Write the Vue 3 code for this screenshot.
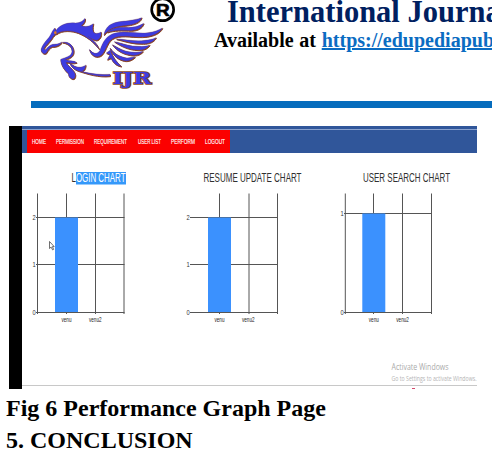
<template>
  <div class="page">
    <header class="masthead">
      <svg class="logo" width="160" height="100" viewBox="0 0 480 300">
        <g v-for="layer in ['shade', 'face']" :key="layer" :class="layer">
          <path v-for="(d, i) in horse" :key="i" :d="d" />
        </g>
        <circle class="eye" cx="76" cy="98" r="4" />
        <text class="ijr" x="248" y="253" textLength="116" lengthAdjust="spacingAndGlyphs">IJR</text>
        <circle class="reg-ring" cx="398" cy="29" r="33" />
        <text class="reg" x="378" y="47" textLength="41" lengthAdjust="spacingAndGlyphs">R</text>
      </svg>
      <div class="heading">
        <h1>International Journal</h1>
        <p>Available at <a>https://edupediapublications.org</a></p>
      </div>
    </header>
    <div class="rule"></div>

    <main class="capture">
      <div class="edge"></div>
      <div class="screen">
        <nav class="navbar">
          <div class="menu">
            <svg
              v-for="item in menu"
              :key="item.label"
              :width="item.width"
              height="23"
              :style="{ marginLeft: item.gap + 'px' }"
            >
              <text x="0" y="14" :textLength="item.width" lengthAdjust="spacingAndGlyphs">{{ item.label }}</text>
            </svg>
          </div>
        </nav>

        <section class="charts">
          <svg v-for="c in charts" :key="c.title" class="chart" width="153" height="180">
            <rect v-if="c.selected" class="selection" x="54" y="19" width="50" height="12.5" />
            <text class="title" :x="c.titleX" y="29" :textLength="c.titleWidth" lengthAdjust="spacingAndGlyphs">
              <template v-if="c.selected">L<tspan class="picked">OGIN CHART</tspan></template>
              <template v-else>{{ c.title }}</template>
            </text>

            <line v-for="x in c.columns" :key="'c' + x" class="grid" :x1="x" :x2="x" y1="40.5" y2="161" />
            <g v-for="t in c.ticks" :key="'t' + t.label">
              <line class="grid" :x1="c.left" :x2="c.right" :y1="t.y" :y2="t.y" />
              <text class="tick" :x="c.left - 3.5" :y="t.y + 2.5" textLength="3.2" lengthAdjust="spacingAndGlyphs">{{ t.label }}</text>
            </g>
            <rect class="bar" :x="c.barX" :y="c.barY" width="23" :height="159 - c.barY" />
            <text class="name" :x="c.barX + 6.5" y="169" textLength="10" lengthAdjust="spacingAndGlyphs">venu</text>
            <text class="name" :x="c.barX + 34" y="169" textLength="12.5" lengthAdjust="spacingAndGlyphs">venu2</text>
            <path v-if="c.selected" class="cursor" d="M27.5 88.5 v7 l1.6 -1.4 l1.5 2.8 l1 -.5 l-1.2 -2.8 h1.8 Z" />
          </svg>
        </section>

        <svg class="notice" width="88" height="24">
          <text class="notice-title" x="2.5" y="9" textLength="57" lengthAdjust="spacingAndGlyphs">Activate Windows</text>
          <text class="notice-text" x="2.5" y="20" textLength="85" lengthAdjust="spacingAndGlyphs">Go to Settings to activate Windows.</text>
        </svg>
        <div class="taskbar"><i></i></div>
      </div>
    </main>

    <h2>Fig 6 Performance Graph Page</h2>
    <h2>5. CONCLUSION</h2>
  </div>
</template>

<script setup>
// head and mane, forelegs, then the wing feathers from top to bottom
const horse = [
  'M75 96 C87 74 112 66 137 69 C151 69 160 62 165 55 C167 64 160 73 154 77 C168 82 180 78 190 71 C187 84 187 93 193 99 C201 102 208 99 213 96 C215 109 209 119 199 121 C190 120 181 115 174 109 C190 121 202 132 207 147 C190 125 170 109 145 99 C124 91 95 89 78 103 Z',
  'M74 84 C65 94 64 103 57 112 C47 124 35 137 33 150 C35 160 44 164 49 159 C54 151 58 143 67 140 C76 141 91 137 95 126 C86 133 75 132 68 133 C60 135 53 141 47 149 L41 147 C49 133 62 124 69 110 C76 103 80 99 77 93 Z',
  'M97 127 C116 123 131 137 131 155 C131 168 119 176 106 178 C118 185 132 180 140 188 C128 192 115 187 108 188 C117 201 134 210 136 225 C136 233 133 238 127 237 C119 234 114 227 116 222 C103 210 92 195 92 178 C104 172 123 171 126 155 C126 142 117 131 97 127 Z',
  'M119 188 C135 204 156 205 167 195 C166 208 161 213 154 214 C181 221 210 225 240 223 L240 228 C204 232 172 221 143 212 C130 207 122 198 119 188 Z',
  'M222 105 C226 78 245 67 277 64 C304 61 322 58 335 53 C329 68 313 73 292 76 C258 79 236 86 222 105 Z',
  'M232 97 C247 83 268 82 288 82 C308 83 324 80 341 70 C336 84 323 91 304 92 C276 91 250 90 232 97 Z',
  'M178 148 C190 163 203 164 210 151 C218 127 229 105 256 99 C290 91 325 103 354 98 C372 96 385 91 397 84 C388 100 372 106 350 110 C313 114 279 103 254 113 C230 122 231 149 215 165 C201 176 183 169 178 148 Z',
  'M259 117 C284 117 317 126 344 121 C357 119 368 118 378 113 C369 127 355 131 339 131 C308 132 282 123 259 117 Z',
  'M253 125 C275 128 298 140 326 139 C339 140 348 139 359 135 C350 147 338 151 323 150 C294 149 271 137 253 125 Z',
  'M247 134 C264 143 282 155 305 156 C318 157 328 157 339 154 C328 166 314 168 300 165 C276 161 259 150 247 134 Z',
  'M240 144 C252 162 272 171 291 174 L315 171 C304 181 292 186 277 181 C258 175 246 161 240 144 Z',
  'M229 159 L241 150 C247 172 261 187 274 199 C259 197 249 188 243 174 L232 179 L240 164 Z',
]

const menu = [
  { label: 'HOME', width: 14, gap: 5 },
  { label: 'PERMISSION', width: 28, gap: 10 },
  { label: 'REQUIREMENT', width: 33, gap: 10 },
  { label: 'USER LIST', width: 23, gap: 11 },
  { label: 'PERFORM', width: 24, gap: 10 },
  { label: 'LOGOUT', width: 20, gap: 10 },
]

const twoSteps = [
  { label: '2', y: 64.5 },
  { label: '1', y: 111.5 },
  { label: '0', y: 159.5 },
]

const charts = [
  {
    title: 'LOGIN CHART', titleX: 49.5, titleWidth: 54, selected: true,
    columns: [15.5, 44.5, 73.5, 102], left: 14, right: 102.5,
    ticks: twoSteps, barX: 33, barY: 64.5,
  },
  {
    title: 'RESUME UPDATE CHART', titleX: 28.5, titleWidth: 98,
    columns: [44.5, 74, 102.5], left: 15, right: 103,
    ticks: twoSteps, barX: 33, barY: 64.5,
  },
  {
    title: 'USER SEARCH CHART', titleX: 35, titleWidth: 87,
    columns: [17.3, 45.5, 74.5, 103.5], left: 16, right: 104,
    ticks: [{ label: '1', y: 60.5 }, { label: '0', y: 159.5 }], barX: 34.3, barY: 60.5,
  },
]
</script>

<style>
body { background: #fff; overflow: hidden; }
</style>

<style scoped>
.page {
  width: 492px;
  height: 450px;
  overflow: hidden;
  font-family: "Liberation Serif", serif;
  color: #000;
}

.masthead {
  display: flex;
  height: 101px;
  padding-left: 30px;
}
.logo { flex: none; }
.shade {
  fill: #7c3a28;
  stroke: #8c4522;
  stroke-width: 3;
  transform: translate(1.5px, 2px);
}
.face {
  fill: #3d3be0;
  stroke: #6b3d68;
  stroke-width: 1;
  stroke-linejoin: round;
}
.eye { fill: #e27a22; }
.ijr {
  font: bold 50px "DejaVu Serif", serif;
  fill: #3d3be0;
  stroke: #8c4522;
  stroke-width: 5;
  paint-order: stroke;
}
.reg-ring { fill: none; stroke: #000; stroke-width: 8; }
.reg {
  font: bold 52px "Liberation Sans", sans-serif;
  stroke: #000;
  stroke-width: 2;
}

.heading { white-space: nowrap; }
h1 {
  margin: -5px 0 0 37px;
  font-size: 30.5px;
  line-height: 34px;
  color: #002060;
}
.heading p {
  margin: 0 0 0 24px;
  font-size: 20px;
  line-height: 23px;
  font-weight: bold;
  word-spacing: .7px;
}
.heading a {
  color: #0b6cc2;
  text-decoration: underline;
}
.rule {
  height: 7px;
  margin-left: 31px;
  background: #056cbd;
}

.capture {
  display: flex;
  width: 468px;
  height: 263px;
  margin: 18px 0 0 9px;
}
.edge { width: 13px; background: #000; }
.screen {
  display: flex;
  flex-direction: column;
  width: 455px;
}
.navbar {
  box-sizing: border-box;
  height: 27px;
  padding: 4px 0 0 5px;
  background: linear-gradient(#30569a 3px, #8aa2cf 3px, #8aa2cf 4px, #30569a 4px);
}
.menu {
  display: flex;
  width: 203px;
  height: 23px;
  background: #fb0000;
}
.menu svg { flex: none; overflow: visible; }
.menu text {
  font: 7.8px "Liberation Sans", sans-serif;
  fill: #fff;
  stroke: #fff;
  stroke-width: .15;
}

.charts { display: flex; height: 180px; }
.chart {
  flex: none;
  font-family: "Liberation Sans", sans-serif;
  overflow: visible;
}
.selection { fill: #3498fa; }
.title { font-size: 12px; fill: #303030; }
.picked { fill: #fff; }
.grid { stroke: #555; stroke-width: 1; }
.bar { fill: #3b91fe; }
.tick { font-size: 8px; fill: #333; }
.name { font-size: 7.5px; fill: #222; }
.cursor { fill: #fff; stroke: #333; stroke-width: .7; }

.notice {
  align-self: flex-end;
  margin-top: 28px;
  font-family: "Open Sans", sans-serif;
  overflow: visible;
}
.notice-title { font-size: 9.5px; fill: #aaa; }
.notice-text { font-size: 7px; fill: #b5b5b5; }
.taskbar { height: 3px; border-top: 1px solid #c8c8c8; }
.taskbar i {
  display: block;
  width: 3px;
  height: 1px;
  margin: 2px 0 0 390px;
  background: #d44a6c;
}

h2 {
  margin: 0 0 0 6px;
  font-size: 24px;
  line-height: 32px;
  white-space: nowrap;
}
.capture + h2 { margin-top: 3px; }
</style>
